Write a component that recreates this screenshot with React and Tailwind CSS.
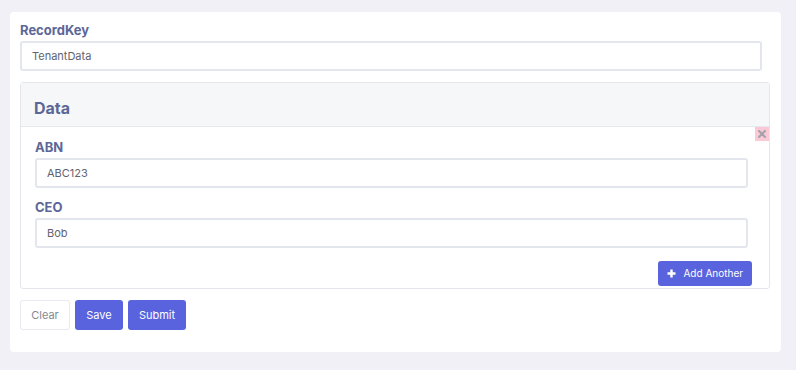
import React from 'react';

const font = { fontFamily: 'Inter, "Noto Sans", sans-serif' };

const Field = ({ label, value, className = '' }) => (
  <div className={`flex flex-col ${className}`}>
    <label className="text-[13px] font-bold text-[#5c6797] leading-[16px] mb-[3px]">{label}</label>
    <div className="h-[30px] border-2 border-[#e4e6ee] rounded-[3px] bg-white flex items-center px-[10px] text-[11px] text-[#5f6370]">
      {value}
    </div>
  </div>
);

export default function App() {
  return (
    <div className="w-[796px] h-[370px] bg-[#f0f0f6] pt-[12px] pl-[10px] pr-[15px]" style={font}>
      <div className="bg-white rounded-[4px] h-[340px] px-[10px] pt-[10px]">
        <Field label="RecordKey" value="TenantData" className="mr-[9px]" />

        <div className="mt-[11px] border border-[#e4e6ec] rounded-[3px] mr-[1px]">
          <div className="h-[44px] bg-[#f6f7f9] border-b border-[#e8e9ef] flex items-center px-[13px] pt-[7px]">
            <h3 className="text-[16px] font-bold text-[#5c6797]">Data</h3>
          </div>
          <div className="relative pl-[14px] pr-[21px] pt-[12px] pb-[2px]">
            <button className="absolute right-0 top-0 w-[14px] h-[14px] bg-[#fbc8d6] flex items-center justify-center">
              <svg width="8" height="8" viewBox="0 0 8 8">
                <path d="M1 1 L7 7 M7 1 L1 7" stroke="#a3a3ab" strokeWidth="2" strokeLinecap="round" />
              </svg>
            </button>
            <div className="flex flex-col gap-[11px]">
              <Field label="ABN" value="ABC123" />
              <Field label="CEO" value="Bob" />
            </div>
            <div className="flex justify-end mt-[13px] mr-[-4px]">
              <button className="h-[25px] px-[9px] bg-[#5863dd] rounded-[3px] text-white text-[10px] font-normal flex items-center gap-[7px]">
                <svg width="9" height="9" viewBox="0 0 9 9">
                  <path d="M4.5 0.5 V8.5 M0.5 4.5 H8.5" stroke="white" strokeWidth="2.4" />
                </svg>
                Add Another
              </button>
            </div>
          </div>
        </div>

        <div className="flex gap-[5px] mt-[11px]">
          <button className="h-[30px] w-[50px] border border-[#e8eaf1] rounded-[3px] text-[11px] text-[#858894] bg-white">Clear</button>
          <button className="h-[30px] w-[48px] bg-[#5863dd] rounded-[3px] text-[11px] text-white font-normal">Save</button>
          <button className="h-[30px] w-[58px] bg-[#5863dd] rounded-[3px] text-[11px] text-white font-normal">Submit</button>
        </div>
      </div>
    </div>
  );
}
